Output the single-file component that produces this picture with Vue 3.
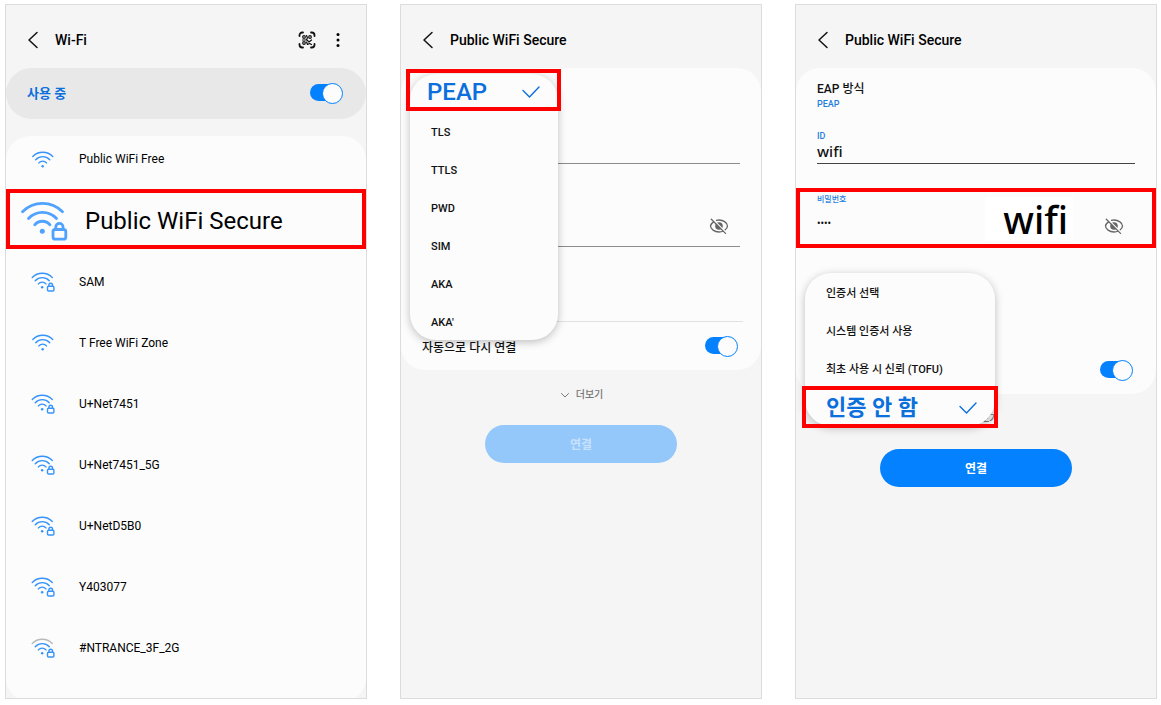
<script setup>
import { ref } from 'vue'

const networks = [
  { name: 'Public WiFi Free', locked: false },
  { name: 'Public WiFi Secure', locked: true, featured: true },
  { name: 'SAM', locked: true },
  { name: 'T Free WiFi Zone', locked: false },
  { name: 'U+Net7451', locked: true },
  { name: 'U+Net7451_5G', locked: true },
  { name: 'U+NetD5B0', locked: true },
  { name: 'Y403077', locked: true },
  { name: '#NTRANCE_3F_2G', locked: true, weak: true },
]
const eapMethods = ['PEAP', 'TLS', 'TTLS', 'PWD', 'SIM', 'AKA', "AKA'"]
const certificates = ['인증서 선택', '시스템 인증서 사용', '최초 사용 시 신뢰 (TOFU)', '인증 안 함']

const wifiOn = ref(true)
const autoA = ref(true)
const autoB = ref(true)
const eap = ref('PEAP')
const cert = ref('인증 안 함')
const idA = ref('')
const passA = ref('')
const idB = ref('wifi')
const passB = ref('wifi')
</script>

<template>
  <main class="page">
    <section class="phone">
      <header class="bar">
        <button class="icon-btn" aria-label="뒤로">
          <svg class="back" viewBox="0 0 12 18"><path d="M10 1.5 2 9l8 7.5" /></svg>
        </button>
        <h1 class="title">Wi-Fi</h1>
        <button class="icon-btn push" aria-label="QR 코드 스캔">
          <svg class="qr" viewBox="0 0 18 18">
            <path class="frame" d="M1.500 5V4.200A2.700 2.700 0 0 1 4.200 1.500H5M13 1.500h.8a2.700 2.700 0 0 1 2.700 2.700V5M16.500 13v.8a2.700 2.700 0 0 1-2.700 2.700H13M5 16.500h-.8a2.700 2.700 0 0 1-2.700-2.700V13" />
            <g class="cells">
              <circle cx="6" cy="6" r="1.300" />
              <circle cx="12" cy="6" r="1.300" />
              <circle cx="6" cy="12" r="1.300" />
              <path d="M8.500 4.500 9.500 7 8 9 4.500 9M9 9l2 2 2.500-2M8.500 11l1 2.500 2-1 2 1" />
            </g>
          </svg>
        </button>
        <button class="icon-btn more-btn" aria-label="더보기 메뉴">
          <svg class="dots" viewBox="0 0 4 16">
            <circle cx="2" cy="2.500" r="1.500" /><circle cx="2" cy="8" r="1.500" /><circle cx="2" cy="13.500" r="1.500" />
          </svg>
        </button>
      </header>

      <label class="power">
        <span>사용 중</span>
        <input v-model="wifiOn" class="switch" type="checkbox" role="switch" />
      </label>

      <ul class="networks">
        <li v-for="n in networks" :key="n.name" :class="{ featured: n.featured }">
          <button class="network">
            <svg class="wifi" :class="{ weak: n.weak }" :viewBox="n.locked ? '0 0 48 40' : '-1 0 48 34'">
              <path class="outer" d="M2.500 10.800A28 28 0 0 1 42.500 10.800" />
              <path d="M8.500 17.500A19 19 0 0 1 36.500 17.500" />
              <path d="M14.700 23.800A10 10 0 0 1 30 23.800" />
              <circle cx="22.300" cy="30.300" r="2.500" />
              <g v-if="n.locked">
                <rect x="33" y="28.500" width="12.800" height="9.600" rx="2.200" />
                <path d="M35.800 28.500v-2.500a3.600 3.600 0 0 1 7.200 0v2.500" />
              </g>
            </svg>
            <span>{{ n.name }}</span>
          </button>
        </li>
      </ul>
    </section>

    <section class="phone">
      <header class="bar">
        <button class="icon-btn" aria-label="뒤로">
          <svg class="back" viewBox="0 0 12 18"><path d="M10 1.5 2 9l8 7.5" /></svg>
        </button>
        <h1 class="title">Public WiFi Secure</h1>
      </header>

      <form class="card" @submit.prevent>
        <div class="method"></div>
        <div class="field">
          <input v-model="idA" class="text" type="text" aria-label="ID" />
        </div>
        <div class="field secret">
          <input v-model="passA" class="text" type="password" aria-label="비밀번호" />
          <button type="button" class="icon-btn reveal" aria-label="비밀번호 표시">
            <svg class="eye" viewBox="0 0 20 16">
              <path d="M5 3.600C3.200 4.800 1.500 6.500 1.500 8c0 3 4 6 8.500 6 1.700 0 3.200-.4 4.500-1M7.500 2.300C8.300 2.100 9.100 2 10 2c4.500 0 8.500 3 8.500 6 0 1.500-1 2.900-2.500 4" />
              <circle cx="10" cy="8" r="3.800" />
              <path class="gap" d="M3.300.8 17.300 14.800" />
              <path d="M2.300 1.300 16.500 15.400" />
            </svg>
          </button>
        </div>
        <div class="cert lined"></div>
        <label class="auto">
          <span>자동으로 다시 연결</span>
          <input v-model="autoA" class="switch" type="checkbox" role="switch" />
        </label>

        <div class="menu eap-menu" role="listbox" aria-label="EAP 방식">
          <button
            v-for="m in eapMethods"
            :key="m"
            type="button"
            class="option"
            :class="{ chosen: m === eap }"
            role="option"
            :aria-selected="m === eap"
            @click="eap = m"
          >
            <span>{{ m }}</span>
            <svg v-if="m === eap" class="check" viewBox="0 0 18 12"><path d="M1 4.500 7.500 11 17 1" /></svg>
          </button>
          <span class="mark"></span>
        </div>
      </form>

      <button class="expand">
        <svg viewBox="0 0 8 5"><path d="M.5.500 4 4 7.500.500" /></svg>
        <span>더보기</span>
      </button>
      <button class="connect" disabled>연결</button>
    </section>

    <section class="phone">
      <header class="bar">
        <button class="icon-btn" aria-label="뒤로">
          <svg class="back" viewBox="0 0 12 18"><path d="M10 1.5 2 9l8 7.5" /></svg>
        </button>
        <h1 class="title">Public WiFi Secure</h1>
      </header>

      <form class="card" @submit.prevent>
        <button type="button" class="method">
          <span>EAP 방식</span>
          <small>PEAP</small>
        </button>
        <div class="field filled">
          <label for="id-b">ID</label>
          <input id="id-b" v-model="idB" class="text" type="text" />
        </div>
        <div class="field secret filled">
          <label for="pass-b">비밀번호</label>
          <input id="pass-b" v-model="passB" class="text" type="password" />
          <strong class="plain">wifi</strong>
          <button type="button" class="icon-btn reveal" aria-label="비밀번호 표시">
            <svg class="eye" viewBox="0 0 20 16">
              <path d="M5 3.600C3.200 4.800 1.500 6.500 1.500 8c0 3 4 6 8.500 6 1.700 0 3.200-.4 4.500-1M7.500 2.300C8.300 2.100 9.100 2 10 2c4.500 0 8.500 3 8.500 6 0 1.500-1 2.900-2.500 4" />
              <circle cx="10" cy="8" r="3.800" />
              <path class="gap" d="M3.300.8 17.300 14.800" />
              <path d="M2.300 1.300 16.500 15.400" />
            </svg>
          </button>
          <span class="mark"></span>
        </div>
        <div class="cert tall"></div>
        <div class="auto">
          <input v-model="autoB" class="switch" type="checkbox" role="switch" aria-label="자동으로 다시 연결" />
        </div>

        <div class="menu cert-menu" role="listbox" aria-label="CA 인증서">
          <button
            v-for="c in certificates"
            :key="c"
            type="button"
            class="option"
            :class="{ chosen: c === cert }"
            role="option"
            :aria-selected="c === cert"
            @click="cert = c"
          >
            <span>{{ c }}</span>
            <svg v-if="c === cert" class="check" viewBox="0 0 18 12"><path d="M1 4.500 7.500 11 17 1" /></svg>
          </button>
          <span class="mark"></span>
        </div>
      </form>

      <button class="expand">
        <svg viewBox="0 0 8 5"><path d="M.5.500 4 4 7.500.500" /></svg>
        <span>더보기</span>
      </button>
      <button class="connect">연결</button>
    </section>
  </main>
</template>

<style>
body {
  margin: 0;
  background: #fff;
}
</style>

<style scoped>
* {
  box-sizing: border-box;
}
button,
input {
  font: inherit;
  color: inherit;
  border: 0;
  padding: 0;
  margin: 0;
  background: none;
  outline: none;
}
svg {
  display: block;
  flex: none;
  fill: none;
  stroke: currentColor;
  stroke-linecap: round;
  stroke-linejoin: round;
}
.page {
  min-height: 100vh;
  padding: 4px 4px 6px 5px;
  display: grid;
  grid-template-columns: repeat(3, minmax(0, 1fr));
  gap: 33px;
  font-family: Roboto, 'Noto Sans CJK KR', sans-serif;
  font-size: 12px;
  line-height: 16px;
  font-weight: 500;
  color: #111;
}
.phone {
  display: flex;
  flex-direction: column;
  border: 1px solid #dcdcdc;
  background: #f5f5f5;
  overflow: hidden;
}

.bar {
  display: flex;
  align-items: center;
  padding: 23px 26px 16px 21px;
}
.icon-btn {
  display: flex;
  align-items: center;
}
.back {
  width: 12px;
  height: 18px;
  stroke-width: 1.5;
}
.title {
  margin: 0 0 0 16px;
  font-size: 14px;
  line-height: 24px;
  font-weight: 500;
  color: #000;
}
.push {
  margin-left: auto;
}
.qr {
  width: 18px;
  height: 18px;
  stroke-width: 1.8;
}
.qr .cells {
  stroke-width: 1.2;
}
.more-btn {
  margin-left: 20px;
}
.dots {
  width: 4px;
  height: 16px;
  fill: #000;
  stroke: none;
}

.power {
  display: flex;
  align-items: center;
  justify-content: space-between;
  min-height: 51px;
  padding: 0 23px 0 21px;
  border-radius: 26px;
  background: #e8e8e8;
  color: #0b6fdc;
  font-size: 13px;
  font-weight: 700;
}
.switch {
  appearance: none;
  position: relative;
  flex: none;
  width: 33px;
  height: 19px;
  margin-bottom: 2px;
}
.switch::before {
  content: '';
  position: absolute;
  inset: 1px 1px 1px 0;
  border-radius: 9px;
  background: #bbb;
}
.switch::after {
  content: '';
  position: absolute;
  top: 0;
  left: 0;
  width: 19px;
  height: 19px;
  border: 1px solid #bbb;
  border-radius: 50%;
  background: #fcfcfc;
}
.switch:checked::before {
  background: #0381fe;
}
.switch:checked::after {
  left: auto;
  right: 0;
  border-color: #0381fe;
}

.networks {
  flex: 1;
  list-style: none;
  margin: 17px 0 -4px;
  padding: 0 0 20px;
  border-radius: 24px;
  background: #fcfcfc;
}
.network {
  display: flex;
  align-items: center;
  gap: 24px;
  width: 100%;
  height: 61px;
  padding: 0 25px;
  text-align: left;
  font-weight: 400;
  color: #000;
}
.networks li:first-child .network {
  height: 53px;
  padding-bottom: 7px;
}
.wifi {
  width: 24px;
  color: #3593fb;
  stroke-width: 2.8;
}
.wifi circle {
  fill: currentColor;
  stroke: none;
}
.wifi.weak .outer {
  stroke: #b9b9b9;
}
.featured {
  margin-bottom: 2px;
  border: 4px solid #f00;
}
.featured .network {
  height: 52px;
  padding: 4px 10px 0;
  gap: 17px;
  font-size: 24px;
  line-height: 32px;
}
.featured .wifi {
  width: 48px;
  color: #4fa3ff;
}

.card {
  position: relative;
  border-radius: 24px;
  background: #fcfcfc;
}
.method {
  display: flex;
  flex-direction: column;
  width: 100%;
  height: 62px;
  padding: 13px 21px 0;
  text-align: left;
}
.method small {
  font-size: 9px;
  line-height: 14px;
  color: #1f7fdc;
}
.field {
  position: relative;
  display: flex;
  flex-direction: column;
  justify-content: flex-end;
  height: 34px;
  margin: 0 21px;
  border-bottom: 1px solid #8c8c8c;
}
.field.filled {
  border-color: #444;
}
.field label {
  font-size: 9px;
  line-height: 12px;
  color: #1f7fdc;
}
.text {
  width: 100%;
  height: 21px;
  padding-bottom: 4px;
  font-family: 'Noto Sans', 'Noto Sans CJK KR', sans-serif;
  font-size: 15px;
}
.secret {
  height: 53px;
  margin-top: 30px;
}
.secret label {
  font-size: 8px;
}
.secret .text {
  height: 40px;
  padding-bottom: 6px;
  font-family: Roboto, 'Noto Sans CJK KR', sans-serif;
  font-size: 10px;
}
.reveal {
  position: absolute;
  right: 11px;
  bottom: 12px;
}
.eye {
  width: 20px;
  height: 16px;
  color: #666;
  stroke-width: 1.3;
}
.eye circle {
  fill: currentColor;
  stroke: none;
}
.eye .gap {
  stroke: #fcfcfc;
}
.plain {
  position: absolute;
  right: 62px;
  bottom: 5px;
  padding: 0 5px 0 18px;
  background: #fff;
  font-family: 'Noto Sans', sans-serif;
  font-size: 38px;
  line-height: 44px;
  font-weight: 500;
  color: #000;
}
.cert {
  height: 75px;
  margin: 0 18px 0 21px;
}
.cert.lined {
  border-bottom: 1px solid #e2e2e2;
}
.cert.tall {
  height: 99px;
}
.auto {
  display: flex;
  align-items: center;
  justify-content: flex-end;
  height: 48px;
  padding: 0 23px 0 21px;
}
.auto span {
  margin-right: auto;
  padding-top: 4px;
}

.menu {
  position: absolute;
  z-index: 1;
  left: 9px;
  border-radius: 26px;
  background: #fcfcfc;
  box-shadow: 0 2px 8px rgba(0, 0, 0, 0.25);
}
.eap-menu {
  top: 6px;
  width: 148px;
}
.cert-menu {
  top: 205px;
  width: 190px;
  padding-bottom: 1px;
}
.option {
  display: flex;
  align-items: center;
  justify-content: space-between;
  width: 100%;
  height: 38px;
  padding: 4px 18px 0 21px;
  font-size: 11px;
  text-align: left;
}
.option.chosen {
  font-size: 22px;
  line-height: 28px;
  font-weight: 700;
  color: #0b6fdc;
}
.eap-menu .chosen {
  padding: 0 18px 3px 17px;
  font-size: 24px;
  font-weight: 500;
}
.check {
  width: 18px;
  height: 12px;
  stroke-width: 1.4;
}
.mark {
  position: absolute;
  border: 4px solid #f00;
  pointer-events: none;
}
.secret .mark {
  inset: -6px -21px -2px;
}
.eap-menu .mark {
  top: -5px;
  left: -4px;
  right: -3px;
  height: 42px;
}
.cert-menu .mark {
  bottom: -2px;
  left: -3px;
  right: -3px;
  height: 42px;
}

.expand {
  display: flex;
  align-items: center;
  align-self: center;
  gap: 7px;
  height: 48px;
  padding: 2px 0 0 2px;
  color: #777;
  font-size: 10px;
}
.expand svg {
  width: 8px;
  height: 5px;
}
.connect {
  align-self: center;
  width: 192px;
  height: 38px;
  margin-top: 7px;
  padding-top: 2px;
  border-radius: 19px;
  background: #0381fe;
  color: #fff;
  font-weight: 700;
}
.connect:disabled {
  background: #94c7fa;
  color: #c6e1fc;
}
</style>
